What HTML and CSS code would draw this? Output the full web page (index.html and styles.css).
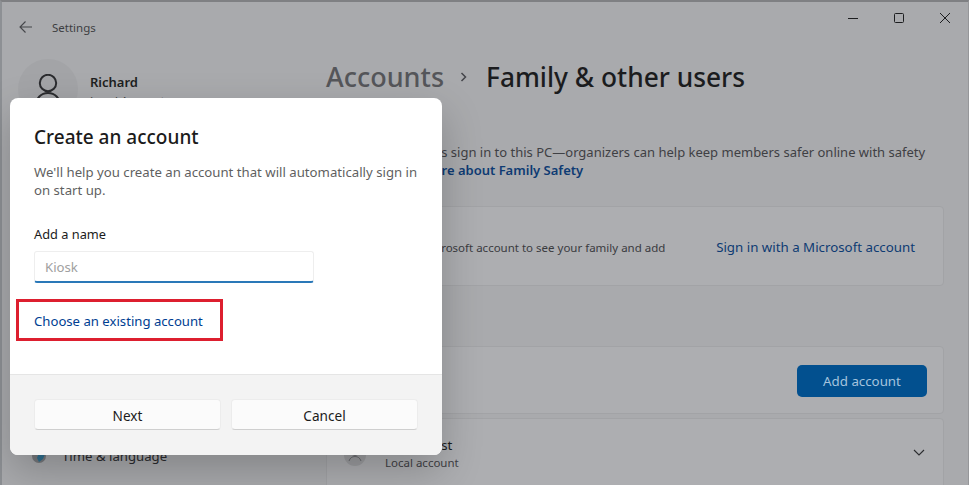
FILE: index.html
```html
<!DOCTYPE html>
<html lang="en">
<head>
<meta charset="utf-8">
<title>Settings</title>
<link rel="stylesheet" href="styles.css">
</head>
<body>
<div class="window">
  <header class="titlebar">
    <svg class="back" width="16" height="14" viewBox="0 0 16 14"><path d="M14 7H2M7.5 1.5 2 7l5.5 5.5" fill="none" stroke="#45464a" stroke-width="1.1"/></svg>
    <span class="app-name">Settings</span>
    <div class="controls">
      <svg width="12" height="12" viewBox="0 0 12 12"><path d="M1 6.5h10" stroke="#1d1e20" stroke-width="1"/></svg>
      <svg width="12" height="12" viewBox="0 0 12 12"><rect x="1.5" y="1.5" width="9" height="9" rx="1" fill="none" stroke="#1d1e20" stroke-width="1"/></svg>
      <svg width="12" height="12" viewBox="0 0 12 12"><path d="M1 1l10 10M11 1 1 11" stroke="#1d1e20" stroke-width="1"/></svg>
    </div>
  </header>
  <div class="layout">
    <aside class="sidebar">
      <div class="user">
        <div class="avatar">
          <svg width="26" height="40" viewBox="0 0 26 40"><circle cx="13" cy="9" r="8.2" fill="none" stroke="#2b2c2f" stroke-width="2"/><path d="M1 32c0-8 5-13 12-13s12 5 12 13" fill="none" stroke="#2b2c2f" stroke-width="2"/></svg>
        </div>
        <div class="user-text">
          <div class="user-name">Richard</div>
          <div class="user-type">Local Account</div>
        </div>
      </div>
      <div class="nav-item">
        <svg class="nav-icon" width="16" height="16" viewBox="0 0 16 16"><circle cx="8" cy="8" r="7" fill="#77797d"/><path d="M9 2l5 4-2 5-4 3-2-4z" fill="#2f6f8f"/></svg>
        <span>Time &amp; language</span>
      </div>
    </aside>
    <main class="content">
      <h1 class="crumbs"><span class="crumb-parent">Accounts</span><svg class="crumb-sep" width="10" height="14" viewBox="0 0 10 14"><path d="M2.5 3 6.5 7l-4 4" fill="none" stroke="#44454a" stroke-width="1.5"/></svg><span class="crumb-current">Family &amp; other users</span></h1>
      <p class="intro">Let family members sign in to this PC—organizers can help keep members safer online with safety settings. <a class="intro-link">Learn more about Family Safety</a></p>
      <section class="card signin">
        <p class="signin-text">Sign in with a Microsoft account to see your family and add</p>
        <a class="signin-link">Sign in with a Microsoft account</a>
      </section>
      <section class="card add-row">
        <span class="add-label">Add other user</span>
        <span class="add-btn">Add account</span>
      </section>
      <section class="card guest">
        <svg class="guest-avatar" width="22" height="22" viewBox="0 0 22 22"><circle cx="11" cy="11" r="11" fill="#9c9da0"/><circle cx="11" cy="8" r="3.500" fill="none" stroke="#6a6b6f" stroke-width="1"/><path d="M5 17c1-3 3-4.500 6-4.500s5 1.500 6 4.500" fill="none" stroke="#6a6b6f" stroke-width="1"/></svg>
        <div class="guest-text">
          <div class="guest-name">New Guest</div>
          <div class="guest-type">Local account</div>
        </div>
        <svg class="chev" width="14" height="10" viewBox="0 0 14 10"><path d="M2 2 7 7l5-5" fill="none" stroke="#2b2c2f" stroke-width="1.1"/></svg>
      </section>
    </main>
  </div>
</div>

<div class="dialog">
  <div class="dialog-body">
    <h2 class="dialog-title">Create an account</h2>
    <p class="dialog-desc">We'll help you create an account that will automatically sign in on start up.</p>
    <label class="field-label">Add a name</label>
    <div class="field">Kiosk</div>
    <div class="choose"><a class="choose-link">Choose an existing account</a></div>
  </div>
  <footer class="dialog-foot">
    <button class="btn">Next</button>
    <button class="btn">Cancel</button>
  </footer>
</div>
</body>
</html>
```
FILE: styles.css
```css
* { box-sizing: border-box; }
html, body { margin: 0; height: 100%; overflow: hidden; }
body { font-family: "Noto Sans", "Liberation Sans", sans-serif; background: #a9aaad; color: #1b1c1e; width: 969px; height: 485px; position: relative; }

.window { height: 485px; border-top: 2px solid #7f8083; border-left: 2px solid #8d9094; border-right: 1px solid #96979a; background: #a9aaad; overflow: hidden; }

.titlebar { display: flex; align-items: center; height: 50px; padding: 0 17px 0 16px; }
.back { flex: none; margin-top: -1px; }
.app-name { margin-left: 18px; font-size: 11.5px; color: #3d3e42; }
.controls { margin-left: auto; display: flex; gap: 34px; margin-top: -18px; }

.layout { display: flex; height: 433px; }
.sidebar { width: 324px; flex: none; padding: 7px 0 0 16px; display: flex; flex-direction: column; }
.user { display: flex; align-items: flex-start; gap: 12px; height: 375px; }
.avatar { width: 60px; height: 60px; border-radius: 50%; background: #a3a4a7; display: flex; justify-content: center; padding-top: 15px; overflow: hidden; }
.user-text { padding-top: 14px; }
.user-name { font-size: 13px; font-weight: 600; color: #1e1f21; line-height: 19px; }
.user-type { font-size: 11.5px; color: #444; line-height: 17px; }
.nav-item { display: flex; align-items: center; gap: 15px; font-size: 13.2px; color: #2a2b2e; padding-left: 13px; margin-top: 13px; }
.nav-icon { flex: none; }

.content { flex: 1; padding: 0 24px 0 0; min-width: 0; }
.crumbs { margin: 6px 0 0; display: flex; align-items: center; font-weight: 500; line-height: 38px; color: #1b1c1e; }
.crumb-parent { font-size: 27px; color: #55565a; }
.crumb-current { font-size: 26.3px; }
.crumb-sep { margin: 0 17px 0 15px; }
.intro { margin: 47px 0 0; font-size: 13px; line-height: 18px; color: #3f4044; height: 61px; }
.intro-link { color: #0e3b73; font-weight: 600; }

.card { background: #adaeb1; border: 1px solid #a2a3a6; border-radius: 4px; display: flex; align-items: center; }
.signin { margin-top: 2px; height: 80px; justify-content: space-between; padding: 0 28px 0 20px; }
.signin-text { margin: 3px 0 0; font-size: 11.5px; color: #3a3b3f; white-space: nowrap; }
.signin-link { font-size: 13.3px; color: #0e3b73; margin-top: 1px; }
.add-row { margin-top: 60px; height: 68px; justify-content: space-between; padding: 0 16px 0 16px; }
.add-label { font-size: 13px; }
.add-btn { width: 130px; height: 32px; margin-top: 1px; border-radius: 5px; background: #02508f; color: #a5c4de; font-size: 13.3px; display: flex; align-items: center; justify-content: center; }
.guest { margin-top: 4px; height: 80px; padding: 0 17px; align-items: flex-start; }
.guest-avatar { margin: 25px 20px 0 0; flex: none; }
.guest-text { padding-top: 17px; margin-left: -1px; }
.guest-name { font-size: 13.2px; line-height: 18px; }
.guest-type { font-size: 11.5px; line-height: 18px; color: #3f4044; }
.chev { margin: 29px 0 0 auto; }

.dialog { position: absolute; left: 10px; top: 98px; width: 432px; height: 357px; background: #fff; border-radius: 8px; box-shadow: 0 16px 40px rgba(0,0,0,.22); display: flex; flex-direction: column; overflow: hidden; }
.dialog-body { height: 276px; padding: 24px 24px 0; }
.dialog-title { margin: 0; font-size: 19px; font-weight: 500; line-height: 30px; color: #1b1b1b; }
.dialog-desc { margin: 11px 0 0; font-size: 13.2px; line-height: 18px; color: #5f5f5f; width: 390px; }
.field-label { display: block; margin-top: 25px; font-size: 12.8px; line-height: 20px; color: #1b1b1b; }
.field { margin-top: 7px; width: 280px; height: 32px; border: 1px solid #eeeeee; border-bottom: 2px solid #2a78b8; border-radius: 3px; background: #fff; padding: 0 10px; font-size: 13.2px; line-height: 30px; color: #a0a0a0; }
.choose { margin: 16px 0 0 -18px; width: 207px; height: 42px; border: 3px solid #dd1f2f; padding: 1px 0 0 15px; display: flex; align-items: center; }
.choose-link { font-size: 13.15px; color: #003e92; }
.dialog-foot { flex: 1; background: #f3f3f3; border-top: 1px solid #e5e5e5; padding: 24px 24px 0; display: flex; gap: 10px; align-items: flex-start; }
.btn { flex: 1; height: 31px; border: 1px solid #ececec; border-bottom-color: #cfcfcf; border-radius: 4px; background: #fbfbfb; font: inherit; font-size: 13.6px; color: #1b1b1b; padding: 1px 0 0; }
```
